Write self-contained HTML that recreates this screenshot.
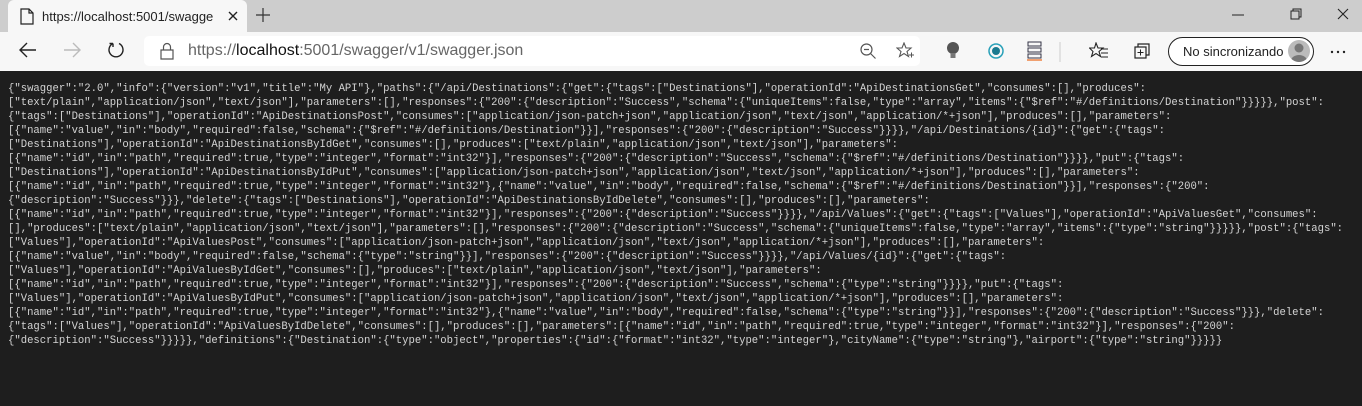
<!DOCTYPE html>
<html><head><meta charset="utf-8"><style>
*{margin:0;padding:0;box-sizing:border-box}
body{width:1362px;height:406px;overflow:hidden;background:#1e1e1e;font-family:"Liberation Sans",sans-serif;position:relative}
.tabbar{position:absolute;left:0;top:0;width:1362px;height:32px;background:#cdcdcd}
.tab{position:absolute;left:8px;top:0;width:239px;height:32px;background:#f7f7f7;border-radius:6px 6px 0 0}
.tab .t{position:absolute;left:34px;top:9px;font-size:13px;color:#222;white-space:nowrap;width:172px;overflow:hidden}
.toolbar{position:absolute;left:0;top:32px;width:1362px;height:39px;background:#f7f7f7}
.addr{position:absolute;left:144px;top:4px;width:776px;height:30px;background:#fff;border-radius:5px}
.addr .u{position:absolute;left:44px;top:6px;font-size:16px;color:#666;white-space:nowrap}
.addr .u b{font-weight:normal;color:#111}
.sync{position:absolute;left:1168px;top:5px;width:146px;height:29px;border:1.5px solid #222;border-radius:15px;background:#fff}
.sync span{position:absolute;left:14px;top:6px;font-size:13px;color:#222}
.av{position:absolute;right:3px;top:2px;width:22px;height:22px;border-radius:50%;background:#bbb;overflow:hidden}
pre{position:absolute;left:8px;top:82px;font-family:"Liberation Mono",monospace;font-size:10.6px;line-height:14px;color:#d4d4d4;white-space:pre}
svg{position:absolute}
</style></head><body>
<div class="tabbar">
<div class="tab">
<svg style="left:12px;top:8px" width="14" height="17" viewBox="0 0 14 17"><path d="M1 1h8l4 4v11H1z M9 1v4h4" fill="none" stroke="#222" stroke-width="1.2"/></svg>
<div class="t">https://localhost:5001/swagger/v1/swagger.json</div>
<svg style="left:220px;top:11px" width="10" height="10" viewBox="0 0 10 10"><path d="M1 1L9 9M9 1L1 9" stroke="#222" stroke-width="1.4"/></svg>
</div>
<svg style="left:256px;top:8px" width="14" height="14" viewBox="0 0 14 14"><path d="M7 0v14M0 7h14" stroke="#333" stroke-width="1.2"/></svg>
<svg style="left:1232px;top:14px" width="12" height="2"><path d="M0 1h12" stroke="#222"/></svg>
<svg style="left:1290px;top:8px" width="12" height="12" viewBox="0 0 12 12"><path d="M1 3h8v8H1z M3 3V1h8v8H9" fill="none" stroke="#222"/></svg>
<svg style="left:1337px;top:8px" width="12" height="12" viewBox="0 0 12 12"><path d="M1 1l10 10M11 1L1 11" stroke="#222" stroke-width="1.1"/></svg>
</div>
<div class="toolbar">
<svg style="left:19px;top:10px" width="18" height="16" viewBox="0 0 18 16"><path d="M17 8H2M8 1L1 8l7 7" fill="none" stroke="#222" stroke-width="1.4"/></svg>
<svg style="left:63px;top:10px" width="18" height="16" viewBox="0 0 18 16"><path d="M1 8h15M10 1l7 7-7 7" fill="none" stroke="#bbb" stroke-width="1.4"/></svg>
<svg style="left:107px;top:9px" width="18" height="18" viewBox="0 0 18 18"><path d="M6 2.5A7 7 0 1 0 12 2.5M6 2.5V6M6 2.5H2.5" fill="none" stroke="#222" stroke-width="1.4"/></svg>
<div class="addr">
<svg style="left:16px;top:6px" width="14" height="18" viewBox="0 0 14 18"><path d="M1 8h12v9H1z M3.5 8V5a3.5 3.5 0 0 1 7 0v3" fill="none" stroke="#555" stroke-width="1.2"/></svg>
<div class="u">https://<b>localhost</b>:5001/swagger/v1/swagger.json</div>
<svg style="left:716px;top:7px" width="17" height="17" viewBox="0 0 17 17"><circle cx="6.5" cy="6.5" r="5.5" fill="none" stroke="#555" stroke-width="1.2"/><path d="M4 6.5h5M10.5 10.5l5 5" stroke="#555" stroke-width="1.2"/></svg>
<svg style="left:752px;top:6px" width="18" height="18" viewBox="0 0 18 18"><path d="M8 1l2 5h5l-4 3.5 1.5 5L8 11.5 3.5 14.5 5 9.5 1 6h5z" fill="none" stroke="#555" stroke-width="1.1"/><path d="M13 13h5M15.5 10.5v5" stroke="#555"/></svg>
</div>
<svg style="left:946px;top:9px" width="14" height="20" viewBox="0 0 14 20"><circle cx="7" cy="7" r="6" fill="#555"/><rect x="4.5" y="12" width="5" height="5" fill="#777"/></svg>
<svg style="left:988px;top:11px" width="16" height="16" viewBox="0 0 16 16"><circle cx="8" cy="8" r="7" fill="none" stroke="#28a0b8" stroke-width="1.5"/><circle cx="8" cy="8" r="4" fill="#1a7a90"/></svg>
<svg style="left:1027px;top:9px" width="15" height="20" viewBox="0 0 15 20"><rect x="1" y="1" width="13" height="4" fill="none" stroke="#334" /><rect x="1" y="7" width="13" height="4" fill="none" stroke="#334"/><rect x="1" y="13" width="13" height="4" fill="none" stroke="#334"/><path d="M0 19h15" stroke="#f0a070" stroke-width="2"/></svg>
<svg style="left:1059px;top:10px" width="2" height="20"><path d="M1 0v20" stroke="#ccc"/></svg>
<svg style="left:1089px;top:10px" width="20" height="18" viewBox="0 0 20 18"><path d="M7 1l2 5h5l-4 3.5 1.5 5L7 11.5 2.5 14.5 4 9.5 0.5 6h5z" fill="none" stroke="#222" stroke-width="1.1"/><path d="M12 7h7M12 11h7M12 15h7" stroke="#222"/></svg>
<svg style="left:1134px;top:10px" width="18" height="18" viewBox="0 0 18 18"><path d="M4 5V2h11v11h-3" fill="none" stroke="#222" stroke-width="1.2"/><rect x="1" y="5" width="11" height="11" fill="none" stroke="#222" stroke-width="1.2"/><path d="M6.5 7.5v6M3.5 10.5h6" stroke="#222"/></svg>
<div class="sync"><span>No sincronizando</span><div class="av"><svg style="left:0;top:0" width="22" height="22" viewBox="0 0 22 22"><circle cx="11" cy="8" r="4.5" fill="#777"/><ellipse cx="11" cy="21" rx="8" ry="6" fill="#777"/></svg></div></div>
<svg style="left:1330px;top:18px" width="16" height="4"><circle cx="2" cy="2" r="1.2" fill="#222"/><circle cx="8" cy="2" r="1.2" fill="#222"/><circle cx="14" cy="2" r="1.2" fill="#222"/></svg>
</div>
<pre>{"swagger":"2.0","info":{"version":"v1","title":"My API"},"paths":{"/api/Destinations":{"get":{"tags":["Destinations"],"operationId":"ApiDestinationsGet","consumes":[],"produces":
["text/plain","application/json","text/json"],"parameters":[],"responses":{"200":{"description":"Success","schema":{"uniqueItems":false,"type":"array","items":{"$ref":"#/definitions/Destination"}}}}},"post":
{"tags":["Destinations"],"operationId":"ApiDestinationsPost","consumes":["application/json-patch+json","application/json","text/json","application/*+json"],"produces":[],"parameters":
[{"name":"value","in":"body","required":false,"schema":{"$ref":"#/definitions/Destination"}}],"responses":{"200":{"description":"Success"}}}},"/api/Destinations/{id}":{"get":{"tags":
["Destinations"],"operationId":"ApiDestinationsByIdGet","consumes":[],"produces":["text/plain","application/json","text/json"],"parameters":
[{"name":"id","in":"path","required":true,"type":"integer","format":"int32"}],"responses":{"200":{"description":"Success","schema":{"$ref":"#/definitions/Destination"}}}},"put":{"tags":
["Destinations"],"operationId":"ApiDestinationsByIdPut","consumes":["application/json-patch+json","application/json","text/json","application/*+json"],"produces":[],"parameters":
[{"name":"id","in":"path","required":true,"type":"integer","format":"int32"},{"name":"value","in":"body","required":false,"schema":{"$ref":"#/definitions/Destination"}}],"responses":{"200":
{"description":"Success"}}},"delete":{"tags":["Destinations"],"operationId":"ApiDestinationsByIdDelete","consumes":[],"produces":[],"parameters":
[{"name":"id","in":"path","required":true,"type":"integer","format":"int32"}],"responses":{"200":{"description":"Success"}}}},"/api/Values":{"get":{"tags":["Values"],"operationId":"ApiValuesGet","consumes":
[],"produces":["text/plain","application/json","text/json"],"parameters":[],"responses":{"200":{"description":"Success","schema":{"uniqueItems":false,"type":"array","items":{"type":"string"}}}}},"post":{"tags":
["Values"],"operationId":"ApiValuesPost","consumes":["application/json-patch+json","application/json","text/json","application/*+json"],"produces":[],"parameters":
[{"name":"value","in":"body","required":false,"schema":{"type":"string"}}],"responses":{"200":{"description":"Success"}}}},"/api/Values/{id}":{"get":{"tags":
["Values"],"operationId":"ApiValuesByIdGet","consumes":[],"produces":["text/plain","application/json","text/json"],"parameters":
[{"name":"id","in":"path","required":true,"type":"integer","format":"int32"}],"responses":{"200":{"description":"Success","schema":{"type":"string"}}}},"put":{"tags":
["Values"],"operationId":"ApiValuesByIdPut","consumes":["application/json-patch+json","application/json","text/json","application/*+json"],"produces":[],"parameters":
[{"name":"id","in":"path","required":true,"type":"integer","format":"int32"},{"name":"value","in":"body","required":false,"schema":{"type":"string"}}],"responses":{"200":{"description":"Success"}}},"delete":
{"tags":["Values"],"operationId":"ApiValuesByIdDelete","consumes":[],"produces":[],"parameters":[{"name":"id","in":"path","required":true,"type":"integer","format":"int32"}],"responses":{"200":
{"description":"Success"}}}}},"definitions":{"Destination":{"type":"object","properties":{"id":{"format":"int32","type":"integer"},"cityName":{"type":"string"},"airport":{"type":"string"}}}}}</pre>
</body></html>
